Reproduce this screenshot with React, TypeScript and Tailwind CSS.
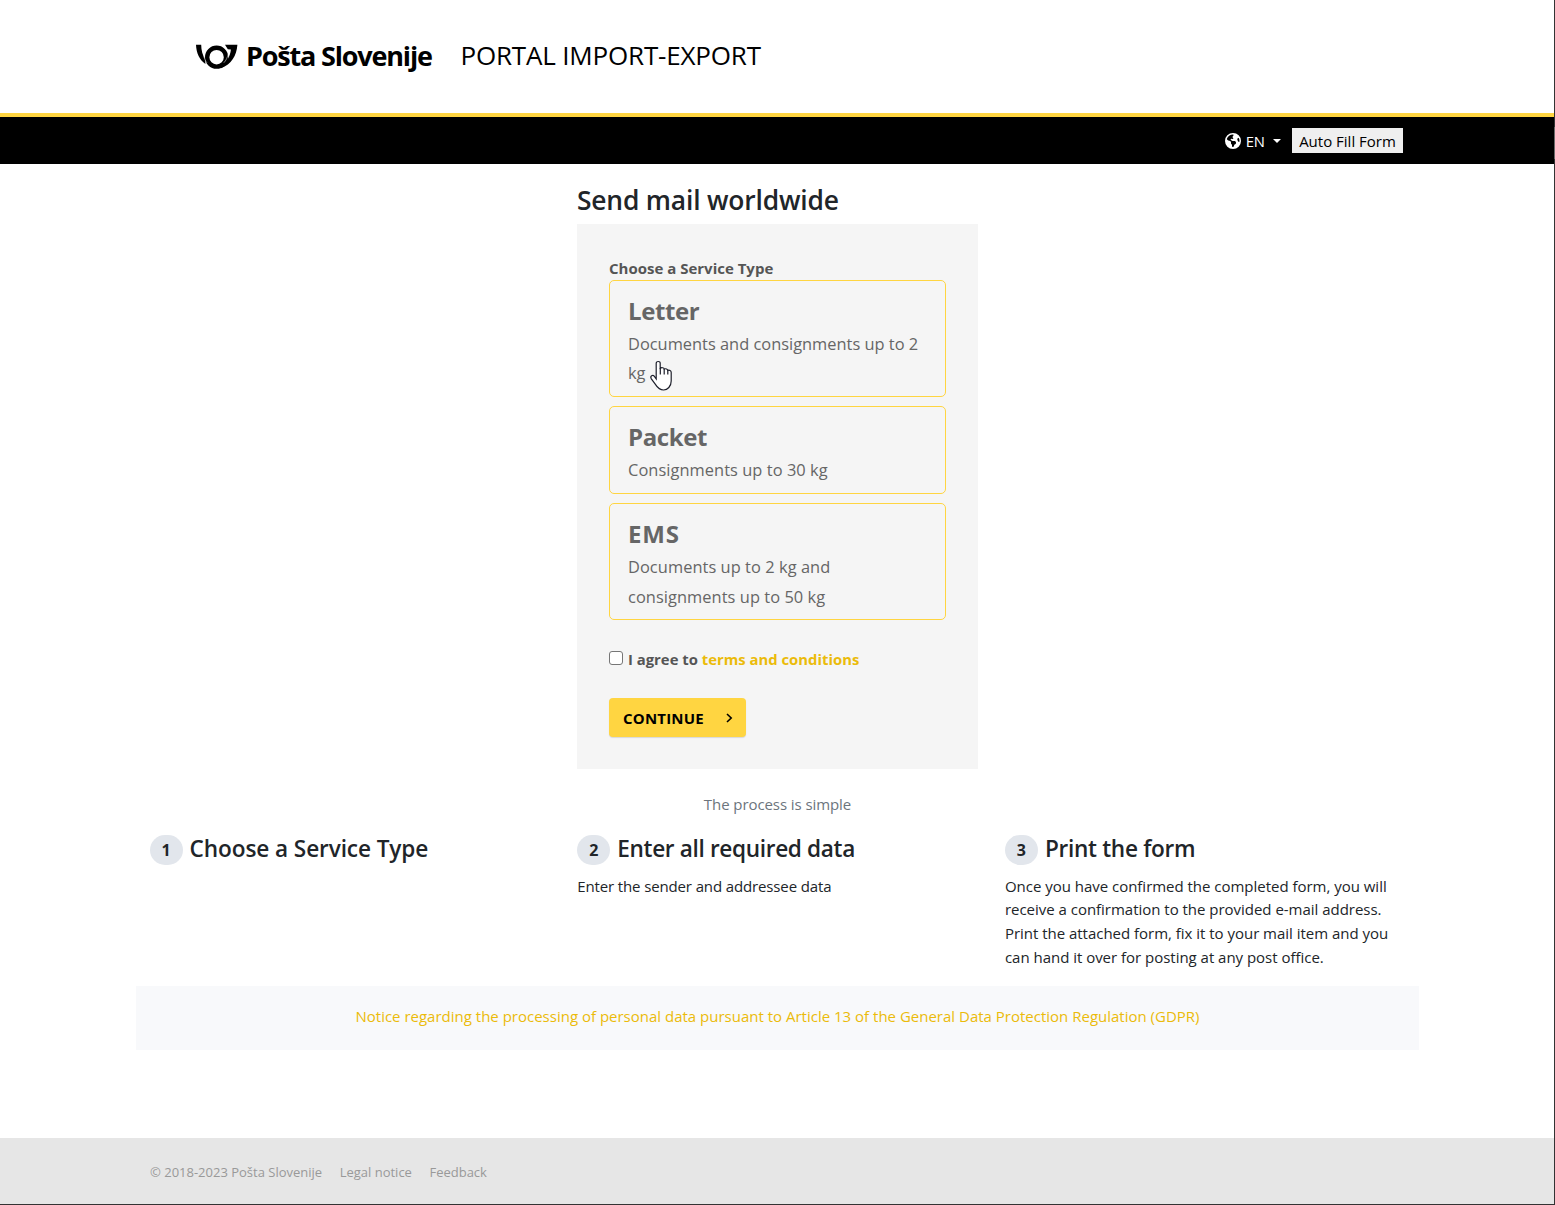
import { FaEarthAmericas } from "react-icons/fa6";

const services = [
  {
    name: "Letter",
    lines: ["Documents and consignments up to 2", "kg"],
    box: "h-[117px]",
    title: "tracking-[-0.4px]",
    body: "leading-[29.4px]",
  },
  {
    name: "Packet",
    lines: ["Consignments up to 30 kg"],
    box: "h-[88px]",
    title: "tracking-[-0.4px]",
    body: "leading-[29.6px] tracking-[0.06px]",
  },
  {
    name: "EMS",
    lines: ["Documents up to 2 kg and", "consignments up to 50 kg"],
    box: "h-[117px]",
    title: "tracking-[0.9px]",
    body: "leading-[29.7px] tracking-[0.06px]",
  },
];

const steps = [
  { title: "Choose a Service Type", lines: [], tracking: "tracking-[-0.1px]" },
  {
    title: "Enter all required data",
    lines: ["Enter the sender and addressee data"],
    tracking: "tracking-[-0.34px]",
    body: "tracking-[-0.13px]",
  },
  {
    title: "Print the form",
    lines: [
      "Once you have confirmed the completed form, you will",
      "receive a confirmation to the provided e-mail address.",
      "Print the attached form, fix it to your mail item and you",
      "can hand it over for posting at any post office.",
    ],
    tracking: "tracking-[-0.3px]",
    body: "tracking-[-0.02px]",
  },
];

function PostHorn() {
  return (
    <svg className="h-[27px] w-[42px]" viewBox="0 0 42 27" fill="none">
      <circle cx="20.6" cy="13.2" r="9.4" stroke="#000" strokeWidth="4.4" />
      <path d="M0 .8H5.2C5.3 6.2 6.4 11 9.2 15.2L9.4 20C3.6 16 .3 9 0 .8Z" fill="#000" />
      <path d="M29 .8H41.4C40.6 11.5 35.5 20.5 25 24.2L24.5 22.6C31.2 18.5 34.2 12 34.9 5.6L31.8 5.2Z" fill="#000" />
      <path d="M7.8 12.5C8.4 14.6 9.4 17 11 18.8M32.2 10C31.6 13.2 30 16.6 27.8 18.8" stroke="#fff" strokeWidth=".5" />
    </svg>
  );
}

function HandCursor() {
  return (
    <svg className="absolute left-[39px] top-[79px] h-[31px] w-[24px]" viewBox="0 0 24 31">
      <path
        d="M7.2 19V3.2C7.2.9 11.2.9 11.2 3.2V8.2C12.5 7.4 15 7.6 15.2 9C16.8 8.4 18.6 9 18.8 10.4C20.3 9.8 22.2 10.6 22.2 12.6V21C22.2 26.4 18.5 30 14.6 30C10.6 30 8.6 27.8 6.6 24.6L2.2 18.6C.8 15.8 3.8 14.6 5.2 16.2Z"
        fill="#fff"
        stroke="#1d1f2b"
        strokeWidth="1.2"
      />
      <path d="M11.3 8V14.5M15.2 9V14.5M18.8 10.3V14.5" stroke="#1d1f2b" strokeWidth="1.2" fill="none" />
    </svg>
  );
}

export default function App() {
  return (
    <div className="relative flex h-[1205px] w-[1555px] flex-col overflow-hidden bg-white font-['Open_Sans','Noto_Sans',sans-serif] text-[15px] text-[#212529]">
      <header className="flex h-[117px] shrink-0 items-start border-b-4 border-[#ffd541] pl-[196px] text-black">
        <div className="mt-[44px]">
          <PostHorn />
        </div>
        <div className="ml-[8px] mt-[36px] w-[188px] whitespace-nowrap text-[27px] font-bold leading-[40px] tracking-[-1.18px]">
          Pošta Slovenije
        </div>
        <h1 className="ml-[26.5px] mt-[35px] whitespace-nowrap text-[26px] font-normal leading-[40px] tracking-[-0.18px]">
          PORTAL IMPORT-EXPORT
        </h1>
      </header>

      <nav className="flex h-[47px] shrink-0 items-center justify-end bg-black pr-[152px]">
        <button className="flex items-center text-[14.8px] text-white">
          <FaEarthAmericas className="mr-[5px] size-[16px]" />
          <span className="pt-px">EN</span>
          <span className="ml-[8px] border-x-4 border-t-4 border-x-transparent border-t-white" />
        </button>
        <button className="ml-[11px] h-[25px] w-[111px] whitespace-nowrap bg-[#efefef] text-[15px] leading-[27px] text-black">
          Auto Fill Form
        </button>
      </nav>

      <main className="mx-auto w-[1283px]">
        <section className="mx-auto w-[401px] pt-[16px]">
          <h2 className="h-[44px] whitespace-nowrap text-[26.4px] font-semibold leading-[40px] tracking-[-0.18px]">
            Send mail worldwide
          </h2>
          <div className="h-[545px] bg-[#f5f5f5] px-8 pt-[33px]">
            <p className="text-[15px] font-bold leading-[23px] text-[#555]">Choose a Service Type</p>
            <div className="flex flex-col gap-[9px]">
              {services.map((s, i) => (
                <div
                  key={s.name}
                  className={`relative rounded-[5px] border border-[#ffd541] pl-[18px] pt-[12px] text-[#666] ${s.box}`}
                >
                  <h3 className={`mb-[1px] text-[24px] font-bold leading-[35px] ${s.title}`}>{s.name}</h3>
                  {s.lines.map((l) => (
                    <p key={l} className={`whitespace-nowrap text-[16.4px] ${s.body}`}>
                      {l}
                    </p>
                  ))}
                  {i === 0 && <HandCursor />}
                </div>
              ))}
            </div>
            <label className="mt-[28px] flex h-[24px] items-center text-[14.85px] font-bold text-[#555]">
              <input
                type="checkbox"
                className="mb-[4px] mr-[5px] size-[14px] appearance-none rounded-[3px] border border-[#767676] bg-white"
              />
              <span className="whitespace-nowrap pb-[2px]">
                I agree to <a className="text-[#ebbb0a]">terms and conditions</a>
              </span>
            </label>
            <button className="mt-[26px] flex h-[39px] w-[137px] items-center rounded-[4px] bg-[#ffd541] pl-[14px] text-[15px] font-bold text-black shadow-[0_1px_1px_rgba(0,0,0,0.12)]">
              <span className="w-[103px] pt-px text-left tracking-[0.2px]">CONTINUE</span>
              <svg className="h-[10px] w-[7px]" viewBox="0 0 7 10" fill="none">
                <path d="M1 1L5.2 5L1 9" stroke="#000" strokeWidth="1.6" />
              </svg>
            </button>
          </div>
        </section>

        <p className="mt-[23px] text-center leading-[24px] tracking-[-0.08px] text-[#6c757d]">The process is simple</p>

        <section className="mt-[18px] grid h-[152px] grid-cols-3">
          {steps.map((s, i) => (
            <div key={s.title} className="pl-[13.6px]">
              <div className="flex h-[32px] items-center">
                <span className="flex h-[30px] w-[33px] items-center justify-center rounded-full bg-[#e2e6ec] text-[16px] font-bold">
                  {i + 1}
                </span>
                <h3
                  className={`mb-[2px] ml-[7px] whitespace-nowrap text-[22.6px] font-semibold leading-[28px] ${s.tracking}`}
                >
                  {s.title}
                </h3>
              </div>
              <div className="mt-[8.5px]">
                {s.lines.map((l) => (
                  <p key={l} className={`whitespace-nowrap leading-[23.7px] ${s.body}`}>
                    {l}
                  </p>
                ))}
              </div>
            </div>
          ))}
        </section>

        <div className="flex h-[64px] items-center justify-center bg-[#f8f9fb] pb-[4px] text-[#ebbb0a]">
          <a className="whitespace-nowrap">
            Notice regarding the processing of personal data pursuant to Article 13 of the General Data Protection
            Regulation (GDPR)
          </a>
        </div>
      </main>

      <footer className="mt-auto flex h-[67px] shrink-0 items-center gap-[17.5px] border-b border-[#333] bg-[#e6e6e6] pl-[150px] pt-[4px] text-[13px] text-[#999]">
        <span>© 2018-2023 Pošta Slovenije</span>
        <a>Legal notice</a>
        <a>Feedback</a>
      </footer>

      <div className="absolute inset-y-0 right-0 w-px bg-[#333]">
        <div className="mt-[127px] h-[32px] bg-[#686868]" />
      </div>
    </div>
  );
}
